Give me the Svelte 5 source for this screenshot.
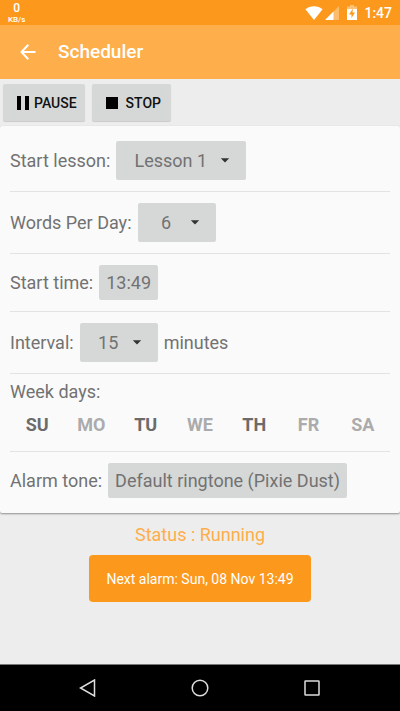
<script lang="ts">
  let lesson = $state(1);
  let words = $state(6);
  let interval = $state(15);

  let days = $state([
    { name: "SU", active: true },
    { name: "MO", active: false },
    { name: "TU", active: true },
    { name: "WE", active: false },
    { name: "TH", active: true },
    { name: "FR", active: false },
    { name: "SA", active: false },
  ]);

  const lessons = Array.from({ length: 9 }, (_, i) => i + 1);
  const wordCounts = Array.from({ length: 20 }, (_, i) => i + 1);
  const intervals = [10, 15, 20, 30, 45, 60];
</script>

{#snippet caret()}
  <svg class="caret" viewBox="0 0 10 5" width="10" height="5" aria-hidden="true">
    <path d="M0.8 0.300h8.400L5 4.600z" fill="#333" />
  </svg>
{/snippet}

<div class="screen">
  <div class="status-bar">
    <div class="speed">
      <span class="rate">0</span>
      <span class="unit">KB/s</span>
    </div>
    <div class="indicators">
      <svg viewBox="0 0 18 14" width="18" height="14" aria-hidden="true">
        <path d="M9 14L0.4 3.2C2.8 1.2 5.800 0.200 9 0.200s6.200 1 8.600 3z" fill="#fff" />
      </svg>
      <svg class="signal" viewBox="0 0 14 14" width="14" height="14" aria-hidden="true">
        <path d="M14 0v14H0z" fill="#fff" opacity="0.35" />
        <path d="M8.500 5.500V14H0z" fill="#fff" />
      </svg>
      <svg class="battery" viewBox="0 0 10 15" width="10" height="15" aria-hidden="true">
        <path d="M3 0h4v1.500h3V4H0V1.500h3z" fill="#fff" opacity="0.4" />
        <path d="M0 4h10v11H0z" fill="#fff" />
        <path d="M6 3.500L2 9.500h2.500V13L8 7.500H5.500z" fill="#fc991c" />
      </svg>
      <span class="clock">1:47</span>
    </div>
  </div>

  <header>
    <button class="back" aria-label="Back">
      <svg viewBox="0 0 16 16" width="16" height="16" fill="none" stroke="#fff" stroke-width="2" aria-hidden="true">
        <path d="M8.300 0.800L1.500 8l6.800 7.200M1.500 8H15.500" />
      </svg>
    </button>
    <h1>Scheduler</h1>
  </header>

  <div class="actions">
    <button class="action">
      <svg viewBox="0 0 14 14" width="14" height="14" aria-hidden="true">
        <path d="M1 0h4v14H1zM9 0h4v14H9z" />
      </svg>
      PAUSE
    </button>
    <button class="action stop">
      <svg viewBox="0 0 12 12" width="12" height="12" aria-hidden="true">
        <path d="M0 0h12v12H0z" />
      </svg>
      STOP
    </button>
  </div>

  <main class="card">
    <div class="row">
      <label for="lesson">Start lesson:</label>
      <div class="select">
        <select id="lesson" bind:value={lesson}>
          {#each lessons as n}
            <option value={n}>Lesson {n}</option>
          {/each}
        </select>
        {@render caret()}
      </div>
    </div>
    <div class="row">
      <label for="words">Words Per Day:</label>
      <div class="select">
        <select id="words" bind:value={words}>
          {#each wordCounts as n}
            <option value={n}>{n}</option>
          {/each}
        </select>
        {@render caret()}
      </div>
    </div>
    <div class="row">
      <span id="start-time">Start time:</span>
      <button class="value" aria-describedby="start-time">13:49</button>
    </div>
    <div class="row">
      <label for="interval">Interval:</label>
      <div class="select">
        <select id="interval" bind:value={interval}>
          {#each intervals as n}
            <option value={n}>{n}</option>
          {/each}
        </select>
        {@render caret()}
      </div>
      <span>minutes</span>
    </div>
    <div class="week">
      <span id="week-days">Week days:</span>
      <div class="days" role="group" aria-labelledby="week-days">
        {#each days as day}
          <button
            class="day"
            class:active={day.active}
            aria-pressed={day.active}
            onclick={() => (day.active = !day.active)}
          >
            {day.name}
          </button>
        {/each}
      </div>
    </div>
    <div class="row">
      <span id="alarm-tone">Alarm tone:</span>
      <button class="value" aria-describedby="alarm-tone">Default ringtone (Pixie Dust)</button>
    </div>
  </main>

  <section class="summary">
    <p>Status : Running</p>
    <div class="next">Next alarm: Sun, 08 Nov 13:49</div>
  </section>

  <nav>
    <button aria-label="Back">
      <svg viewBox="0 0 18 18" width="18" height="18" aria-hidden="true">
        <path d="M15.500 1v16L1.500 9z" />
      </svg>
    </button>
    <button aria-label="Home">
      <svg viewBox="0 0 18 18" width="18" height="18" aria-hidden="true">
        <circle cx="9" cy="9" r="7.800" />
      </svg>
    </button>
    <button aria-label="Recent apps">
      <svg viewBox="0 0 18 18" width="18" height="18" aria-hidden="true">
        <rect x="2" y="2" width="14" height="14" rx="0.500" />
      </svg>
    </button>
  </nav>
</div>

<style>
  :global(body) {
    background: #ededed;
    margin: 0;
  }

  .screen {
    color: #727272;
    display: flex;
    flex-direction: column;
    font-family: Roboto, "Liberation Sans", sans-serif;
    font-size: 18px;
    line-height: 24px;
    min-height: 100vh;
  }

  button,
  select {
    border: 0;
    color: inherit;
    cursor: pointer;
    font: inherit;
    margin: 0;
  }

  .status-bar {
    align-items: center;
    background: #fc991c;
    color: #fff;
    display: flex;
    height: 25px;
    justify-content: space-between;
    padding: 0 8px;
  }

  .speed {
    display: flex;
    flex-direction: column;
    font-weight: 500;
    text-align: center;
  }

  .rate {
    font-size: 12px;
    line-height: 13px;
  }

  .unit {
    font-size: 8px;
    line-height: 9px;
  }

  .indicators {
    align-items: center;
    display: flex;
  }

  .signal {
    margin-left: 2px;
  }

  .battery {
    margin: 0 7px 0 8px;
  }

  .clock {
    font-size: 14px;
    font-weight: 500;
  }

  header {
    align-items: center;
    background: #feae4a;
    color: #fff;
    display: flex;
    height: 54px;
  }

  .back {
    background: none;
    display: flex;
    padding: 12px 22px 12px 20px;
  }

  h1 {
    font-size: 19px;
    font-weight: 500;
    margin: 0;
  }

  .actions {
    display: flex;
    gap: 7px;
    padding: 5px 3px;
  }

  .action {
    align-items: center;
    background: #d6d8d7;
    border-radius: 2px;
    box-shadow: 0 1px 1px rgba(0, 0, 0, 0.15);
    color: #111;
    display: flex;
    font-size: 14px;
    font-weight: 500;
    gap: 4px;
    height: 37px;
    padding: 0 8px 0 13px;
  }

  .stop {
    gap: 8px;
    padding: 0 10px 0 14px;
  }

  .card {
    background: #fafafa;
    border-radius: 2px;
    box-shadow: 0 1px 2px rgba(0, 0, 0, 0.4);
    padding: 4px 10px;
  }

  .row {
    align-items: center;
    border-bottom: 1px solid #e3e3e3;
    display: flex;
    gap: 6px;
    padding: 11px 0;
  }

  .row:last-child {
    border-bottom: 0;
  }

  .select {
    display: flex;
    position: relative;
  }

  select {
    appearance: none;
    background: #d6d8d7;
    border-radius: 2px;
    height: 39px;
    padding: 0 39px 0 18px;
    text-align: center;
    text-align-last: center;
  }

  .caret {
    pointer-events: none;
    position: absolute;
    right: 16px;
    top: 17px;
  }

  .value {
    background: #d6d8d7;
    border-radius: 2px;
    height: 35px;
    padding: 0 7px;
  }

  .week {
    border-bottom: 1px solid #e3e3e3;
    padding: 6px 0 5px;
  }

  .days {
    display: grid;
    grid-template-columns: repeat(7, 1fr);
  }

  .day {
    background: none;
    color: #ababab;
    font-weight: 700;
    height: 42px;
    padding: 0;
  }

  .day.active {
    color: #6b6b6b;
  }

  .summary {
    align-items: center;
    display: flex;
    flex: 1;
    flex-direction: column;
    gap: 8px;
    padding: 10px 8px;
  }

  .summary p {
    color: #feae4a;
    margin: 0;
  }

  .next {
    background: #fc991c;
    border-radius: 4px;
    color: #fff;
    font-size: 14px;
    padding: 12px 17px 11px;
  }

  nav {
    background: #000;
    border-top: 1px solid #777;
    display: flex;
    height: 46px;
    justify-content: center;
  }

  nav button {
    align-items: center;
    background: none;
    display: flex;
    justify-content: center;
    width: 28%;
  }

  nav svg {
    fill: none;
    stroke: #ddd;
    stroke-width: 1.500;
  }
</style>
